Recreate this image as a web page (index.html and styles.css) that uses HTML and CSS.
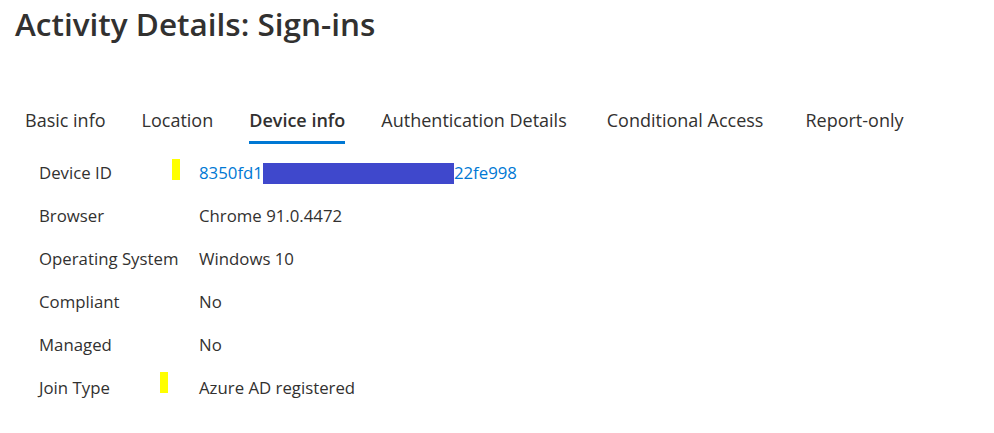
FILE: index.html
```html
<!DOCTYPE html>
<html>
<head>
    <title>Activity Details: Sign-ins</title>
    <link rel="stylesheet" href="styles.css">
</head>
<body>
    <div class="panel">
        <h1>Activity Details: Sign-ins</h1>

        <div class="tabs">
            <div class="tab">Basic info</div>
            <div class="tab">Location</div>
            <div class="tab active">Device info</div>
            <div class="tab">Authentication Details</div>
            <div class="tab">Conditional Access</div>
            <div class="tab">Report-only</div>
        </div>

        <div class="details">
            <div class="row">
                <div class="label">Device ID</div>
                <div class="value">
                    <a href="#" class="link">8350fd1<span class="redact"></span>22fe998</a>
                </div>
                <span class="marker marker-id"></span>
            </div>
            <div class="row">
                <div class="label">Browser</div>
                <div class="value">Chrome 91.0.4472</div>
            </div>
            <div class="row">
                <div class="label">Operating System</div>
                <div class="value">Windows 10</div>
            </div>
            <div class="row">
                <div class="label">Compliant</div>
                <div class="value">No</div>
            </div>
            <div class="row">
                <div class="label">Managed</div>
                <div class="value">No</div>
            </div>
            <div class="row">
                <div class="label">Join Type</div>
                <div class="value">Azure AD registered</div>
                <span class="marker marker-join"></span>
            </div>
        </div>
    </div>
</body>
</html>
```

FILE: styles.css
```css
body {
    margin: 0;
    font-family: "Open Sans", "Noto Sans", sans-serif;
    color: #323130;
    background: #fff;
}
.panel {
    padding: 4px 0 0 15px;
}
h1 {
    margin: 0;
    font-size: 31.5px;
    font-weight: 600;
    line-height: 40px;
}
.tabs {
    display: flex;
    margin-top: 63px;
    margin-left: -8px;
}
.tab {
    padding: 0 18px;
    font-size: 18px;
    line-height: 26px;
    height: 37px;
    box-sizing: border-box;
}
.tab:nth-child(n+5) {
    margin-left: 4px;
}
.tab:last-child {
    margin-left: 6px;
}
.tab.active {
    font-weight: 600;
    position: relative;
}
.tab.active::after {
    content: "";
    position: absolute;
    left: 18px;
    right: 18px;
    bottom: 0;
    height: 3px;
    background: #0078d4;
}
.details {
    padding: 7px 0 0 24px;
}
.row {
    display: flex;
    align-items: center;
    height: 43px;
    font-size: 16.8px;
    position: relative;
}
.label {
    width: 160px;
}
.link {
    color: #0078d4;
    text-decoration: none;
}
.redact {
    display: inline-block;
    width: 191px;
    height: 21px;
    background: #3f48cc;
    vertical-align: -5px;
}
.marker {
    position: absolute;
    width: 8px;
    height: 21px;
    background: #ffff00;
}
.marker-id {
    left: 133px;
    top: 8px;
}
.marker-join {
    left: 121px;
    top: 6px;
}
```
